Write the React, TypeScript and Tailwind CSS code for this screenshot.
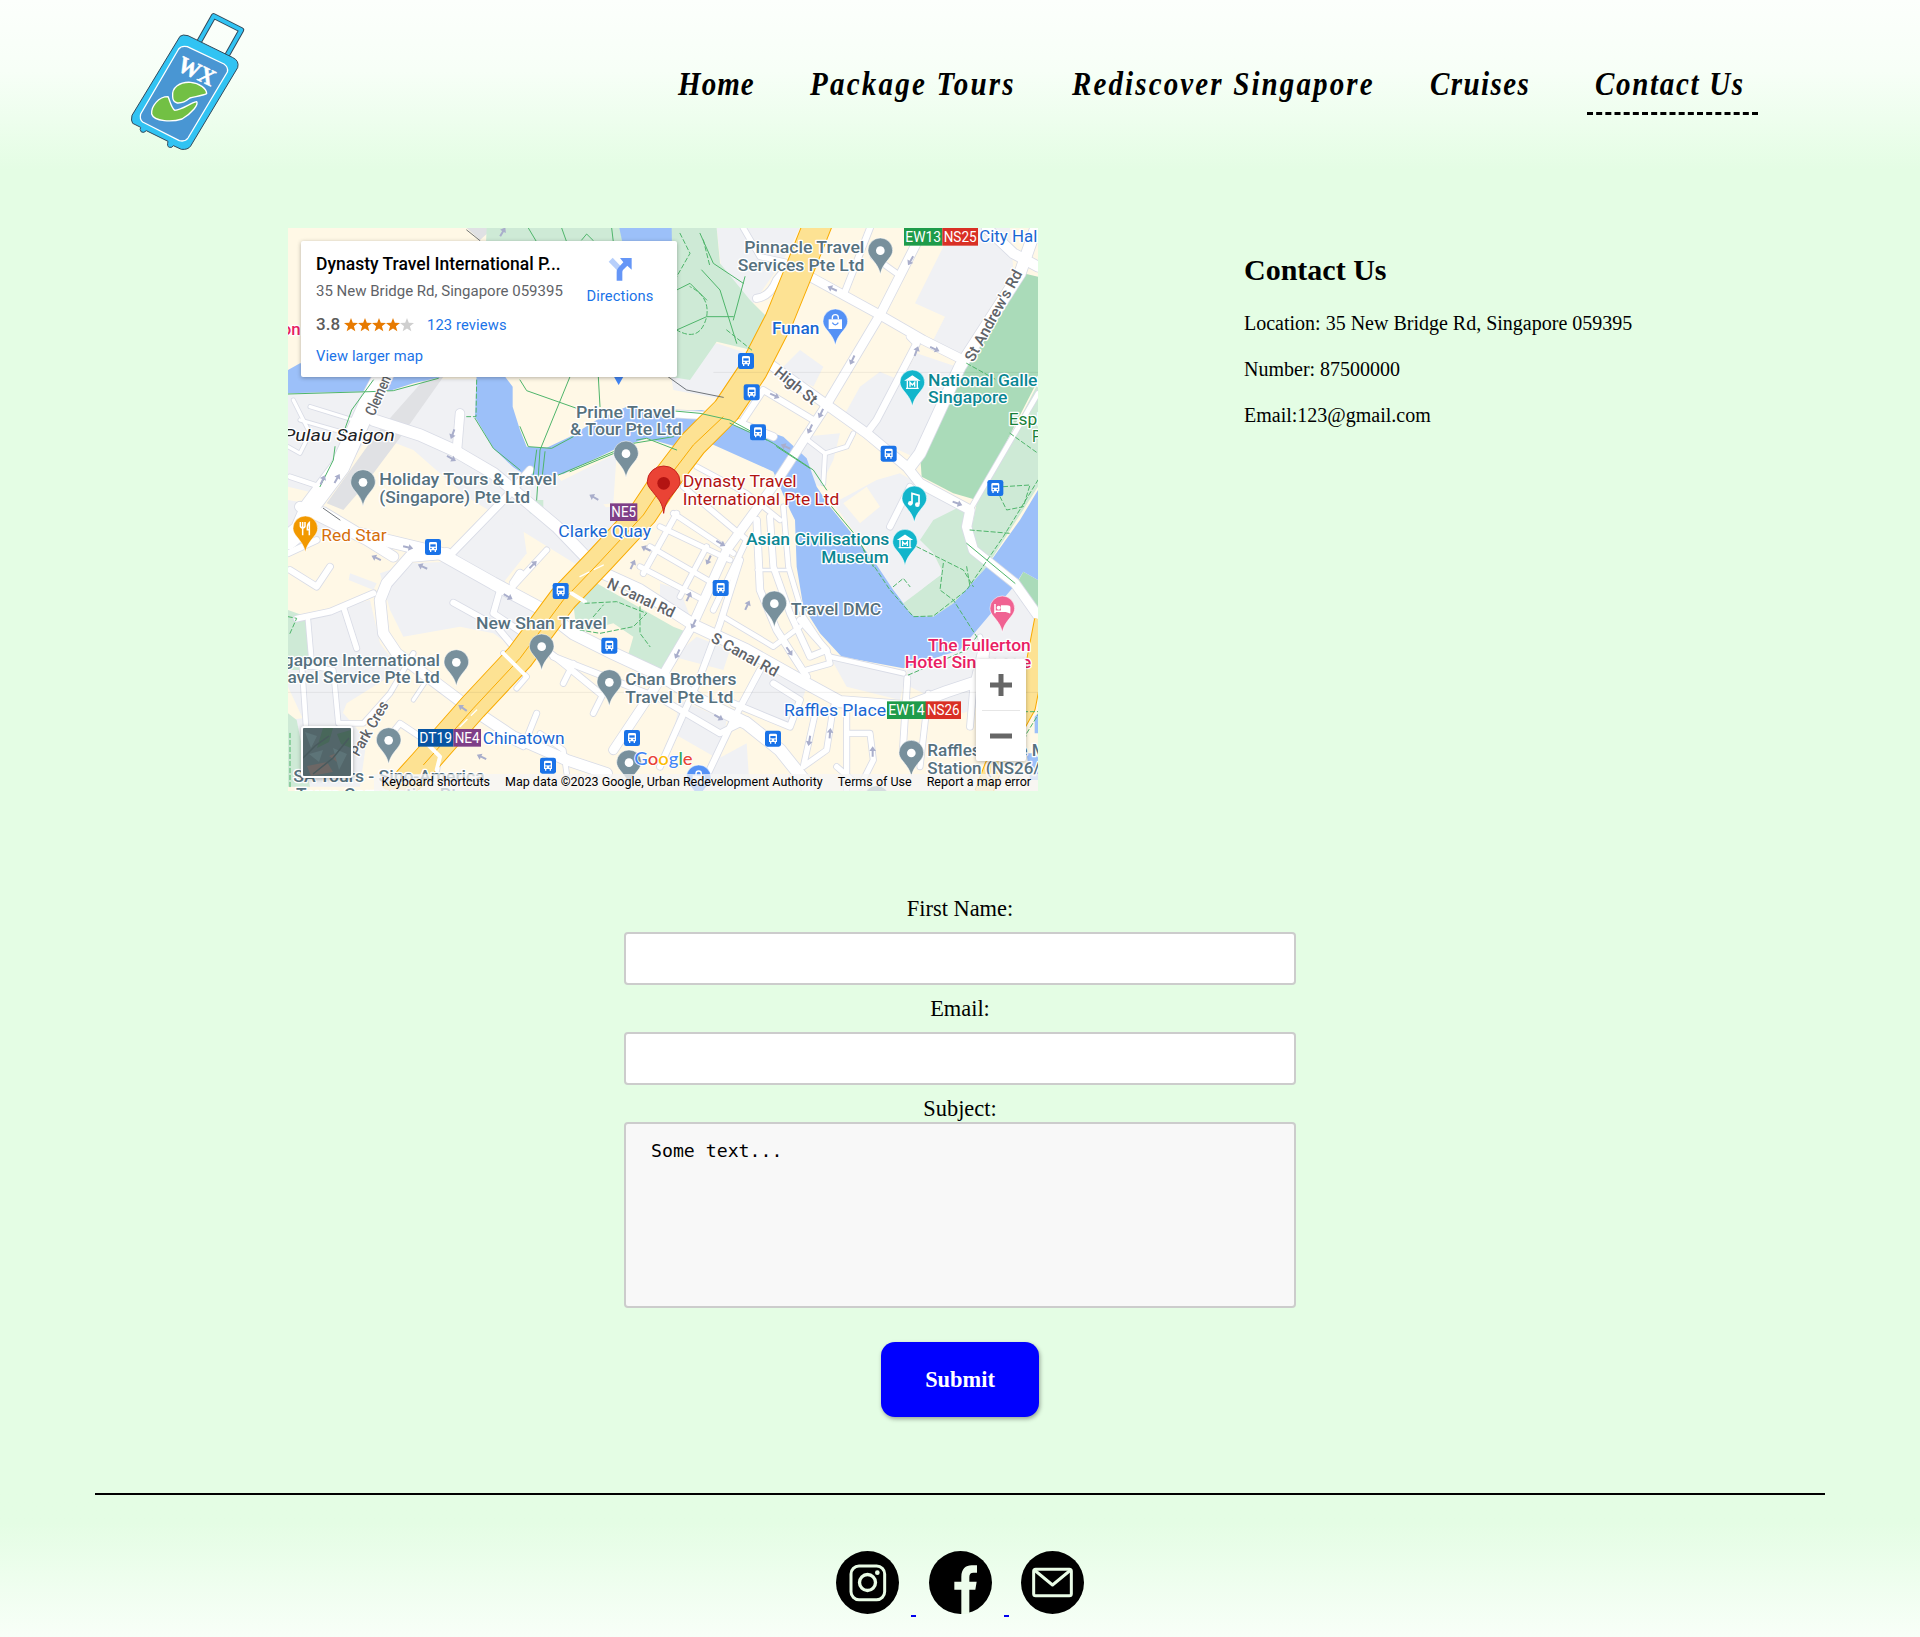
import React from "react";

const navItems = [
  { label: "Home", cls: "w-[132px]", text: "tracking-[1.2px]" },
  { label: "Package Tours", cls: "w-[262px]", text: "tracking-[2.5px]" },
  { label: "Rediscover Singapore", cls: "w-[358px]", text: "tracking-[2.4px]" },
  { label: "Cruises", cls: "w-[165px]", text: "tracking-[1.6px]" },
  { label: "Contact Us", cls: "w-[171px] border-b-[3px] border-dashed border-black", text: "tracking-[1.9px]" },
];

function Logo() {
  return (
    <svg className="h-[170px] w-[200px]" viewBox="0 0 600 510">
      <g strokeLinejoin="round">
        <path d="M297 126L341 48L424 90L379 170" fill="none" stroke="#34495a" strokeWidth="17" />
        <path d="M297 126L341 48L424 90L379 170" fill="none" stroke="#31c3f3" strokeWidth="11" />
        <path
          d="M240 109Q248 102 264 107L397 172Q419 182 413 203L272 438Q264 450 244 448L220 437Q217 444 208 442Q200 440 204 424L139 392Q132 400 124 396Q118 388 122 382L98 370Q92 362 96 346Z"
          fill="#31c3f3"
          stroke="#34495a"
          strokeWidth="3"
        />
        <path
          d="M236 147Q244 136 262 140L372 192Q386 202 382 216L264 414Q256 426 238 422L128 366Q118 358 122 342Z"
          fill="#4996d3"
          stroke="#fff"
          strokeWidth="4"
        />
        <path
          d="M218 290C214 262 240 245 272 247C298 249 320 266 320 281C308 287 284 290 270 294C260 302 247 310 232 309C222 306 218 300 218 290Z"
          fill="#72c044"
          stroke="#fff"
          strokeWidth="4"
        />
        <path
          d="M155 342C153 318 176 290 204 290C210 302 213 322 224 331C250 328 268 310 290 305C296 314 278 337 246 357C218 366 162 366 155 342Z"
          fill="#72c044"
          stroke="#fff"
          strokeWidth="4"
        />
      </g>
      <text
        x="0"
        y="0"
        transform="translate(228 209) rotate(26)"
        textLength="116"
        lengthAdjust="spacingAndGlyphs"
        fontFamily="Liberation Serif, serif"
        fontWeight="700"
        fontSize="70"
        fill="#fff"
        stroke="#fff"
        strokeWidth="1.5"
      >
        WX
      </text>
    </svg>
  );
}

const greys = [
  "M24 520L330 512L470 478L590 478L585 590L650 690L735 765L830 765L910 870L1080 850L1040 930L900 1040L560 830L400 690L270 640L150 830L24 800Z",
  "M1010 700L830 790L900 860L1000 850Z",
  "M390 1030L640 1020L690 1110L790 1180L820 1230L710 1290L640 1240L540 1220L370 1250L330 1170L300 1060Z",
  "M510 1005L640 880L730 930L740 1000L660 1100Z",
  "M640 860L760 790L960 840L1000 890L900 1030Z",
  "M80 1190L270 1140L300 1270L360 1350L200 1450L180 1500L80 1520L24 1400L24 1350L80 1350Z",
  "M24 1500L190 1480L260 1560L240 1700L24 1700Z",
  "M1310 24L1560 24L1510 120L1420 250L1330 200Z",
  "M1950 24L2190 24L2200 150L2040 410L1960 360L1995 290L1905 250L1990 80Z",
  "M1740 500L1800 455L1880 490L1800 640L1690 590Z",
  "M1910 400L2030 440L1900 710L1770 650Z",
  "M1170 450L1310 370L1400 400L1340 540L1180 510Z",
  "M1560 390L1630 440L1600 500L1500 450Z",
  "M1570 650L1680 640L1660 720L1620 800L1540 760Z",
  "M1860 770L1960 800L2050 870L2010 960L1960 1000L2000 1090L1880 1160L1780 1050L1830 890Z",
  "M2080 1210L2200 1100L2270 1200L2230 1400L2050 1480L1890 1400L1880 1350L2030 1290Z",
  "M1650 1310L1880 1350L1860 1440L1700 1400Z",
  "M1250 1250L1350 1290L1330 1350L1180 1310Z",
  "M1380 1460L1450 1350L1580 1400L1540 1520Z",
  "M1200 1440L1340 1500L1320 1620L1180 1540Z",
  "M24 840L140 860L180 940L100 960L24 1000Z",
  "M210 1060L290 1090L280 1110L206 1080Z",
  "M1290 1630L1400 1570L1410 1720L1290 1720Z",
  "M1140 1090L1200 1110L1230 1190L1140 1150Z",
];

const roads: [string, number][] = [
  ["M430 240L270 540L180 740L90 860L60 930L24 960", 56],
  ["M280 600L420 645L520 690L640 760L830 920L960 1055L1080 1110L1250 1220L1400 1290L1560 1380L1680 1445L1880 1460L2000 1415L2090 1385L2110 1300", 34],
  ["M60 860L260 960L340 1010", 30],
  ["M130 880L230 940L480 1000L640 1090L790 1170L880 1240L1000 1300L1150 1370L1260 1440L1400 1510L1500 1590L1580 1690L1590 1760", 36],
  ["M500 1000L390 1010L320 1090L300 1140L310 1240L350 1300L550 1450L700 1550L860 1620L980 1660", 32],
  ["M50 1196L150 1175L280 1120", 18],
  ["M190 1160L230 1285", 16],
  ["M84 1200L96 1340L66 1340L80 1550", 14],
  ["M100 1340L160 1350L175 1510L250 1510L330 1420L400 1300", 14],
  ["M30 1050L110 1100L150 1040", 18],
  ["M24 1000L110 960", 18],
  ["M510 1005L680 830L750 750", 22],
  ["M660 1110L640 1180L760 1260L850 1330L960 1420", 18],
  ["M520 1148L650 1220L700 1280", 18],
  ["M690 1110L800 990", 16],
  ["M700 1090L720 1060", 22],
  ["M670 1300L740 1370L710 1405", 14],
  ["M820 1310L1000 1380L1150 1440L1320 1540L1400 1500", 18],
  ["M850 1390L880 1330", 16],
  ["M940 1480L980 1400", 16],
  ["M690 1560L730 1580L770 1480", 16],
  ["M400 1440L440 1380", 10],
  ["M320 1560L360 1510L480 1590L470 1650", 16],
  ["M860 1660L850 1590L780 1540", 14],
  ["M530 700L540 580", 26],
  ["M30 770L120 800L180 730", 14],
  ["M40 540L90 640L60 700L24 680", 10],
  ["M90 560L220 600L200 640L60 600", 10],
  ["M1590 170L1800 285L1930 360L2050 420", 26],
  ["M1950 -10L1800 285L1630 570L1500 770L1340 990L1240 1210L1140 1380L1060 1500L1000 1590", 26],
  ["M1460 425L1620 540L1760 640L1880 740L1920 790L2070 870L2060 920L2080 990L2205 1090L2290 1210", 28],
  ["M2290 -40L2220 160L2040 440L1920 700L1890 740", 34],
  ["M2120 24L2200 100L2274 140", 30],
  ["M2274 520L2070 870", 14],
  ["M1760 640L1790 600L1910 370L1890 350", 20],
  ["M1770 24L1695 215", 18],
  ["M1780 110L1850 160", 16],
  ["M1390 24L1440 110L1580 140", 16],
  ["M1430 235Q1470 230 1490 180L1540 120", 22],
  ["M1390 600L1450 510L1600 600", 18],
  ["M1570 650L1635 700L1700 680L1720 640M1635 700L1630 790", 12],
  ["M1250 740L1400 820L1500 900", 14],
  ["M1160 580L1330 590L1480 650", 22],
  ["M1210 800L1400 960L1300 1170", 16],
  ["M1140 920L1350 1020M1110 980L1300 1090M1080 1040L1270 1140", 15],
  ["M1180 880L1360 1000", 15],
  ["M1280 980L1200 1130", 15],
  ["M1090 1060L1190 880", 16],
  ["M1430 900L1440 1110L1490 1230L1580 1370", 20],
  ["M1470 890L1480 1040L1530 1180L1590 1310L1640 1290L1560 1200", 18],
  ["M1510 860L1525 1040L1570 1190L1650 1310L1870 1360", 14],
  ["M1380 1020L1320 1210L1260 1370L1140 1640", 18],
  ["M1330 1190L1380 1220L1480 1280L1560 1220", 14],
  ["M1430 1050L1520 1050", 8],
  ["M1580 1350L1650 1330L1640 1290", 16],
  ["M1440 1350L1360 1500L1270 1690", 18],
  ["M1360 1450L1530 1520L1560 1440L1480 1390", 18],
  ["M1610 1460L1570 1640L1640 1590L1660 1460", 16],
  ["M1700 1480L1700 1710M1700 1540L1770 1540L1780 1620L1740 1700L1670 1640", 16],
  ["M1882 1375L1868 1600", 18],
  ["M1945 1420L1920 1640", 16],
  ["M2080 1400L2070 1520", 18],
  ["M2100 1250L2130 1350", 14],
  ["M1830 920L1890 800", 18],
];

const slate = "#56717e";

function Pin({ x, y, color = "#78909c", children }: { x: number; y: number; color?: string; children?: React.ReactNode }) {
  return (
    <g transform={`translate(${x} ${y})`}>
      <path
        d="M0 71C-4 50 -13 40 -25 25C-34 14 -37 7 -37 -1A37 37 0 0 1 37 -1C37 7 34 14 25 25C13 40 4 50 0 71Z"
        fill={color}
        stroke="#fff"
        strokeOpacity=".55"
        strokeWidth="3"
      />
      {children ?? <circle r="13" fill="#fff" />}
    </g>
  );
}

function Bus({ x, y }: { x: number; y: number }) {
  return (
    <g transform={`translate(${x} ${y})`}>
      <rect x="-24" y="-24" width="48" height="48" rx="7" fill="#1a73e8" />
      <path d="M-12 -11Q-12 -15 -7 -15H7Q12 -15 12 -11V10H9V15H5V10H-5V15H-9V10H-12Z" fill="#fff" />
      <path d="M-8 -8H8V-1H-8Z" fill="#1a73e8" />
      <circle cx="-6" cy="4.5" r="2.4" fill="#1a73e8" />
      <circle cx="6" cy="4.5" r="2.4" fill="#1a73e8" />
    </g>
  );
}

function T({ x, y, w, c = slate, s = 51, weight = 500, rot = 0, italic = false, halo = true, children }: {
  x: number; y: number; w: number; c?: string; s?: number; weight?: number; rot?: number; italic?: boolean; halo?: boolean; children: string;
}) {
  return (
    <text
      transform={`translate(${x} ${y}) rotate(${rot})`}
      textLength={w}
      lengthAdjust="spacingAndGlyphs"
      fontSize={s}
      fontWeight={weight}
      fontStyle={italic ? "italic" : "normal"}
      fill={c}
      stroke={halo ? "#fff" : "none"}
      strokeWidth={halo ? 8 : 0}
      strokeLinejoin="round"
      paintOrder="stroke"
    >
      {children}
    </text>
  );
}

function Tag({ x, y, w, c, children }: { x: number; y: number; w: number; c: string; children: string }) {
  return (
    <g>
      <rect x={x} y={y} width={w} height="53" fill={c} />
      <T x={x + 4} y={y + 42} w={w - 8} c="#fff" s={43} weight={400} halo={false}>{children}</T>
    </g>
  );
}

function Museum() {
  return (
    <g fill="none" stroke="#fff" strokeWidth="4">
      <path d="M-18 -8L0 -20L18 -8Z" fill="#fff" />
      <path d="M-15 -6V15M15 -6V15M-19 17H19M-7 12V-1L0 7L7 -1V12" />
    </g>
  );
}

const arrows: [number, number, number][] = [
  [668, 36, -60], [518, 642, 110], [514, 715, 30], [128, 780, -65], [171, 776, -60], [384, 982, 12], [289, 1014, 205],
  [428, 1040, 205], [759, 1034, -45], [684, 1130, 30], [548, 1464, 215], [605, 1611, 205], [1058, 1034, -65],
  [1098, 986, 205], [1322, 970, 30], [1286, 1020, 115], [1226, 1130, -65], [1241, 1212, 115], [1402, 1156, -65],
  [1528, 1294, 55], [1316, 1492, 30], [1588, 1562, 100], [1650, 1540, -85], [1778, 1595, -90], [1892, 122, 120],
  [1657, 206, 205], [1717, 420, 115], [1909, 394, -70], [1964, 387, 25], [1484, 527, 25], [1623, 580, 115],
  [1590, 627, 115], [1517, 680, 205], [2032, 850, 20], [1192, 1302, 115], [942, 832, 210],
];

function MapDrawing() {
  return (
    <svg className="block h-full w-full" viewBox="24 24 2250 1689" fontFamily="Roboto, sans-serif" preserveAspectRatio="none">
      <rect x="24" y="24" width="2250" height="1689" fill="#fff8e6" />
      {greys.map((d) => (
        <path key={d} d={d} fill="#f0f1f4" />
      ))}
      <path d="M490 470L440 470L290 640L140 850L190 870L250 800L370 640ZM560 24L640 24L600 60Z" fill="#e0e1e4" />

      <g fill="#ceead6">
        <path d="M620 24H1310L1320 130L1410 240L1470 300L1415 390L1310 365L1230 480L1170 470H600Z" />
        <path d="M2274 490L2090 850L2080 900L2060 960L1960 880L1920 930L1990 1040L1880 1160L1880 1190L1960 1190L2020 1150L2120 1040L2274 800Z" />
        <path d="M950 1090L1180 1220L1230 1240L1140 1365L1040 1320L1060 1250L1000 1210L890 1240L880 1150Z" />
        <path d="M24 1170L80 1190L86 1350H24ZM24 1480L50 1500L90 1700H24Z" />
        <path d="M730 840L790 840L790 890L750 880Z" />
      </g>
      <path d="M2230 160L2274 170V480L2090 840L2020 820L1925 770L1920 700L2060 430Z" fill="#aadbb9" />
      <path d="M2230 1055L2274 1080V1190L2205 1100Z" fill="#aadbb9" />

      <g fill="#9cc0f9">
        <path d="M24 450L60 430H480V472L400 490L330 512L24 520Z" />
        <path d="M1018 24H1175L1176 80H1030Z" />
        <path d="M590 460L585 590L640 685L700 742L735 765L790 770L850 762L1000 690L1100 655L1190 680L1290 670L1480 755L1530 870L1545 900L1550 1040L1570 1160L1620 1240L1685 1310L1870 1345L2040 1290L2205 1095L2230 1055L2274 1080V810L2220 900L2120 1040L2020 1150L1960 1190L1900 1188L1840 1110L1780 1020L1650 860L1610 800L1580 715L1510 650L1340 590L1265 570L1140 577L1040 560L950 600L870 650L800 683L740 680L720 630L698 560L698 500L660 450Z" />
        <path d="M2264 1490L2274 1480V1540H2264ZM2240 1600H2274V1680H2250Z" />
      </g>
      <path d="M1660 850L1790 780L1860 760L2050 870L2010 960L1960 1000L1990 1060L1870 1150L1780 1015Z" fill="#f0f1f4" />
      <path d="M1690 850L1760 800L1800 860L1740 910Z" fill="#fff8e6" />
      <path d="M1960 900L2060 850L2080 960L2120 1040L2020 1150L1960 1188L1890 1180L1870 1150L1990 1060L1960 1000L1920 960Z" fill="#ceead6" />

      <g fill="none" strokeLinejoin="round" strokeLinecap="round">
        {roads.map(([d, w]) => (
          <path key={d} d={d} stroke="#d9dce6" strokeWidth={w + 5} />
        ))}
        {roads.map(([d, w]) => (
          <path key={d} d={d} stroke="#fff" strokeWidth={w} />
        ))}
        <g strokeLinecap="butt">
          <path d="M1618 0L1550 170L1497 300L1420 450L1340 570L1240 670L1160 775L1090 880L960 1020L850 1135L720 1310L580 1460L430 1630L340 1730" stroke="#f9ab00" strokeWidth="88" />
          <path d="M1618 0L1550 170L1497 300L1420 450L1340 570L1240 670L1160 775L1090 880L960 1020L850 1135L720 1310L580 1460L430 1630L340 1730" stroke="#fde293" strokeWidth="82" />
          <path d="M1330 590L1240 675L1160 780L1090 885L960 1025L850 1140L720 1315L580 1465L430 1635" stroke="#f9ab00" strokeWidth="3" />
          <path d="M2290 1200L2240 1460L2140 1640L2110 1720" stroke="#f9ab00" strokeWidth="56" />
          <path d="M2290 1200L2240 1460L2140 1640L2110 1720" stroke="#fde293" strokeWidth="50" />
        </g>
        <path d="M875 1120L915 1145M670 1300L740 1370M430 1560L480 1610L470 1650" stroke="#fff" strokeWidth="12" />
        <path d="M900 1070L980 1030M540 1520L590 1470" stroke="#fff" strokeWidth="4" strokeDasharray="30 18" />

        <g stroke="#4fb56b" strokeWidth="3">
          <path d="M24 522L270 515L340 512L475 475M280 480L215 570L190 640M165 680L160 720L120 800" />
          <path d="M870 470L780 690L770 840M720 480L740 512L890 565M955 470L960 560M585 595L640 685L720 750M720 620L745 680L815 685L880 650M770 690L758 780M795 695L785 785" />
          <path d="M745 24L770 66M845 24L860 66M905 60L920 42L940 62M995 24L1000 66" />
          <path d="M835 765L1060 670L1180 650M870 755L1050 680M1070 660L1100 655L1190 690" />
          <path d="M1260 40L1300 130L1390 190M1265 150L1320 210L1370 370M1190 330L1280 290L1360 290M1280 240L1230 190L1190 210M1395 170L1360 300" />
          <path d="M1150 570L1260 580L1350 600L1480 670L1600 750L1640 810M1350 610L1460 660M1490 680L1590 745" />
          <path d="M1655 860L1730 950L1780 1040M2060 970L2205 1090" />
        </g>
        <g stroke="#4fb56b" strokeWidth="3" strokeDasharray="13 8">
          <path d="M590 480L588 590L560 590M1200 40L1230 100L1190 170L1150 210M1190 210Q1150 260 1190 330Q1260 370 1280 290Q1290 230 1230 200M1270 60L1290 140M1340 330L1415 390" />
          <path d="M1750 990L1830 1110L1900 1190L1960 1188L2060 1110L2170 950L2274 780M1910 980L2050 1050L2080 1100M2070 930L2190 940M1990 1030L1980 1110L2020 1140L2090 1250M2060 1040L2070 1100M1840 1100L1870 1075L1890 1100" />
          <path d="M2060 430L2150 480M2190 640L2274 700M2170 800L2250 795L2230 860L2180 870L2160 830M2210 1640L2240 1540L2280 1475M2230 1475H2274" />
          <path d="M915 1150L1010 1145L1100 1180L1060 1220L960 1240L900 1230M1080 1160L1080 1240L1110 1280M940 1190L970 1155M24 1190L50 1195L30 1240M30 1540V1700" />
          <path d="M1885 1365L2060 1290L2090 1250" />
        </g>
        <g stroke="#555b61" strokeWidth="2.5">
          <path d="M1150 460L1220 510L1330 532M560 30L600 62M130 865L180 900" />
        </g>
      </g>

      {arrows.map(([x, y, r], i) => (
        <path key={i} transform={`translate(${x} ${y}) rotate(${r})`} d="M-15 -3H2V-10L16 0L2 10V3H-15Z" fill="#a9aecb" />
      ))}
      <path d="M24 1417H2274M1300 457H2274" stroke="#00000010" strokeWidth="3" />

      <T x={283} y={590} w={165} c="#5f6368" s={46} rot={-66}>Clemence</T>
      <T x={1480} y={462} w={150} c="#5f6368" s={46} rot={39}>High St</T>
      <T x={2080} y={428} w={306} c="#5f6368" s={46} rot={-61}>St Andrew's Rd</T>
      <T x={978} y={1102} w={218} c="#5f6368" s={46} rot={25}>N Canal Rd</T>
      <T x={1290} y={1264} w={222} c="#5f6368" s={46} rot={29}>S Canal Rd</T>
      <T x={236} y={1612} w={182} c="#5f6368" s={46} rot={-60}>Park Cres</T>

      <path d="M1002 470H1030L1016 495Z" fill="#4285f4" />
      <T x={-24} y={345} w={86} c="#e91e63">tion</T>
      <T x={10} y={662} w={334} c="#202124" weight={400} italic>Pulau Saigon</T>
      <T x={298} y={796} w={532}>Holiday Tours &amp; Travel</T>
      <T x={298} y={848} w={452}>(Singapore) Pte Ltd</T>
      <T x={888} y={594} w={298}>Prime Travel</T>
      <T x={870} y={646} w={336}>&amp; Tour Pte Ltd</T>
      <T x={1393} y={100} w={360}>Pinnacle Travel</T>
      <T x={1373} y={152} w={380}>Services Pte Ltd</T>
      <T x={1476} y={342} w={142} c="#1967d2">Funan</T>
      <T x={2098} y={67} w={186} c="#1967d2" weight={400}>City Hall</T>
      <T x={1944} y={498} w={373} c="#0b8793">National Gallery</T>
      <T x={1944} y={550} w={238} c="#0b8793">Singapore</T>
      <T x={2186} y={615} w={240} c="#188038" weight={400}>Esplanade</T>
      <T x={2256} y={667} w={90} c="#188038" weight={400}>Park</T>
      <T x={1208} y={802} w={342} c="#b31412" weight={400}>Dynasty Travel</T>
      <T x={1208} y={854} w={470} c="#b31412" weight={400}>International Pte Ltd</T>
      <T x={124} y={962} w={196} c="#d56e0c" weight={400}>Red Star</T>
      <T x={835} y={951} w={278} c="#1967d2" weight={400}>Clarke Quay</T>
      <T x={588} y={1226} w={392}>New Shan Travel</T>
      <T x={-62} y={1337} w={542}>Singapore International</T>
      <T x={-25} y={1388} w={504}>Travel Service Pte Ltd</T>
      <T x={1036} y={1396} w={333}>Chan Brothers</T>
      <T x={1036} y={1448} w={324}>Travel Pte Ltd</T>
      <T x={608} y={1571} w={246} c="#1967d2" weight={400}>Chinatown</T>
      <T x={40} y={1687} w={574}>SA Tours - Sino-America</T>
      <T x={48} y={1740} w={510}>Tours Corporation Pte</T>
      <T x={1398} y={975} w={430} c="#0b8793">Asian Civilisations</T>
      <T x={1624} y={1028} w={202} c="#0b8793">Museum</T>
      <T x={1532} y={1186} w={272}>Travel DMC</T>
      <T x={1944} y={1292} w={308} c="#e91e63">The Fullerton</T>
      <T x={1874} y={1344} w={380} c="#e91e63">Hotel Singapore</T>
      <T x={1512} y={1488} w={306} c="#1967d2" weight={400}>Raffles Place</T>
      <T x={1942} y={1609} w={420}>Raffles Place MRT</T>
      <T x={1942} y={1661} w={338}>Station (NS26/</T>

      <Tag x={1872} y={24} w={115} c="#1e9b4a">EW13</Tag>
      <Tag x={1987} y={24} w={107} c="#d93025">NS25</Tag>
      <Tag x={1821} y={1444} w={117} c="#1e9b4a">EW14</Tag>
      <Tag x={1937} y={1444} w={106} c="#d93025">NS26</Tag>
      <Tag x={990} y={850} w={82} c="#7f3f88">NE5</Tag>
      <Tag x={414} y={1527} w={106} c="#0754a3">DT19</Tag>
      <Tag x={520} y={1527} w={83} c="#7f3f88">NE4</Tag>

      <Pin x={249} y={787} />
      <Pin x={1038} y={701} />
      <Pin x={1801} y={92} />
      <Pin x={529} y={1327} />
      <Pin x={785} y={1280} />
      <Pin x={988} y={1387} />
      <Pin x={326} y={1561} />
      <Pin x={1047} y={1628} />
      <Pin x={1483} y={1151} />
      <Pin x={1894} y={1599} />
      <Pin x={1790} y={1735} />
      <Pin x={76} y={926} color="#f29900">
        <path d="M-15 -20V-8Q-15 -3 -8 -2V20M-8 -20V-4M-1 -20V-8Q-1 -3 -8 -2M12 20V-18Q5 -12 6 3H12" stroke="#fff" strokeWidth="4.5" fill="none" />
      </Pin>
      <Pin x={1666} y={305} color="#5491f5">
        <path d="M-20 -7H20V22H-20Z" fill="#fff" />
        <path d="M-9 -7V-12A9 9 0 0 1 9 -12V-7" stroke="#fff" strokeWidth="4" fill="none" />
        <path d="M-9 3Q0 16 9 3" stroke="#5491f5" strokeWidth="4" fill="none" />
      </Pin>
      <Pin x={1256} y={1673} color="#5491f5">
        <path d="M-18 -7H18V18H-18Z" fill="#fff" />
        <path d="M-8 -7V-12A8 8 0 0 1 8 -12V-7" stroke="#fff" strokeWidth="4" fill="none" />
      </Pin>
      <Pin x={1897} y={488} color="#12b5cb"><Museum /></Pin>
      <Pin x={1875} y={966} color="#12b5cb"><Museum /></Pin>
      <Pin x={1903} y={836} color="#12b5cb">
        <path d="M-7 14V-16L14 -10V16" stroke="#fff" strokeWidth="5" fill="none" />
        <circle cx="-12" cy="14" r="7" fill="#fff" />
        <circle cx="9" cy="18" r="7" fill="#fff" />
      </Pin>
      <Pin x={2167} y={1166} color="#f06292">
        <path d="M-22 -14V14M-22 8H22M22 14V-4Q22 -8 14 -8H-2V6" stroke="#fff" strokeWidth="4.5" fill="#fff" />
        <circle cx="-11" cy="-3" r="6" fill="#fff" />
      </Pin>

      <Bus x={1398} y={423} />
      <Bus x={1415} y={517} />
      <Bus x={1434} y={637} />
      <Bus x={1826} y={701} />
      <Bus x={2146} y={804} />
      <Bus x={459} y={981} />
      <Bus x={842} y={1113} />
      <Bus x={988} y={1277} />
      <Bus x={1322} y={1104} />
      <Bus x={1479} y={1556} />
      <Bus x={1056} y={1554} />
      <Bus x={804} y={1637} />

      <path
        d="M1151 880C1148 850 1136 838 1121 819C1109 804 1102 797 1102 785A49 47 0 0 1 1200 785C1200 797 1193 804 1181 819C1166 838 1154 850 1151 880Z"
        fill="#ea4335"
        stroke="#c5221f"
        strokeWidth="3"
      />
      <circle cx="1151" cy="790" r="19" fill="#b31412" />

      <g fontFamily="Lato, sans-serif" fontSize="53" fontWeight="500" stroke="#fff" strokeWidth="5" paintOrder="stroke">
        <text x="1063" y="1634" textLength="175" lengthAdjust="spacingAndGlyphs">
          <tspan fill="#4285f4">G</tspan>
          <tspan fill="#ea4335">o</tspan>
          <tspan fill="#fbbc04">o</tspan>
          <tspan fill="#4285f4">g</tspan>
          <tspan fill="#34a853">l</tspan>
          <tspan fill="#ea4335">e</tspan>
        </text>
      </g>
    </svg>
  );
}

function Star({ className }: { className: string }) {
  return (
    <svg className={className} viewBox="0 0 24 24" fill="currentColor">
      <path d="M12 0l3.100 8.300 8.900.4-7 5.500 2.400 8.600L12 17.900 4.600 22.800 7 14.200 0 8.700l8.900-.4z" />
    </svg>
  );
}

function PlaceCard() {
  return (
    <div className="absolute left-[13px] top-[13px] flex h-[136px] w-[376px] justify-between rounded-[2px] bg-white pl-[15px] pr-[23px] shadow-[0_1px_4px_rgba(0,0,0,0.3)]">
      <div className="flex flex-col whitespace-nowrap">
        <div className="mt-[11px] text-[17.500px] font-medium leading-6 text-black">Dynasty Travel International P...</div>
        <div className="mt-[5px] w-[247px] text-[15px] leading-[21px] text-[#5f6368]">35 New Bridge Rd, Singapore 059395</div>
        <div className="mt-[12px] flex h-[21px] items-center">
          <span className="w-[28px] text-[17px] font-medium text-[#5b5b5b]">3.8</span>
          <div className="flex text-[#e77a00]">
            <Star className="h-[14px] w-[14px]" />
            <Star className="h-[14px] w-[14px]" />
            <Star className="h-[14px] w-[14px]" />
            <Star className="h-[14px] w-[14px]" />
            <Star className="h-[14px] w-[14px] text-[#cfcfcf]" />
          </div>
          <span className="ml-[13px] translate-y-px text-[14.700px] tracking-[0.15px] text-[#1a73e8]">123 reviews</span>
        </div>
        <div className="mt-[11px] text-[14.700px] leading-[21px] tracking-[0.1px] text-[#1a73e8]">View larger map</div>
      </div>
      <div className="flex w-[68px] flex-col items-center pt-[16px]">
        <svg className="h-6 w-6" viewBox="0 0 72 72">
          <path d="M2 14L14 2L37 26L27 40Z" fill="#b7cffb" />
          <path d="M26 71V46Q26 37 32 31L46 16L36 3H71V38L58 26L45 39Q43 42 43 46V71Z" fill="#6596f7" />
        </svg>
        <div className="mt-[5px] text-[14.700px] leading-[21px] tracking-[0.1px] text-[#1a73e8]">Directions</div>
      </div>
    </div>
  );
}

function MapPanel() {
  return (
    <div className="relative h-[563px] w-[750px] shrink-0 overflow-hidden font-['Roboto',sans-serif]">
      <MapDrawing />
      <PlaceCard />
      <div className="absolute right-[12px] top-[431px] flex h-[102px] w-[50px] flex-col items-center rounded-[2px] bg-white text-[#666] shadow-[0_1px_4px_rgba(0,0,0,0.3)]">
        <svg className="h-[51px] w-[50px]" viewBox="0 0 50 51"><path d="M14 26H36M25 15V37" stroke="currentColor" strokeWidth="5" /></svg>
        <div className="h-px w-[38px] shrink-0 bg-[#e6e6e6]" />
        <svg className="h-[50px] w-[50px]" viewBox="0 0 50 50"><path d="M14 25H36" stroke="currentColor" strokeWidth="5" /></svg>
      </div>
      <div className="absolute bottom-0 right-0 flex h-[17px] items-center gap-[15px] whitespace-nowrap bg-[#f5f5f5]/75 pl-[8px] pr-[7px] text-[12.500px] text-black">
        <span>Keyboard shortcuts</span>
        <span>Map data ©2023 Google, Urban Redevelopment Authority</span>
        <span>Terms of Use</span>
        <span>Report a map error</span>
      </div>
      <div className="absolute left-[13px] top-[498px] h-[52px] w-[52px] overflow-hidden rounded-[3px] border-2 border-white bg-[#53666a] shadow-[0_1px_4px_rgba(0,0,0,0.3)]">
        <svg className="h-full w-full" viewBox="0 0 48 48">
          <path d="M20 0L30 0L26 14L14 20ZM34 6L48 2V20L38 16Z" fill="#48675a" />
          <path d="M4 38L24 34L30 44L8 48ZM26 28L36 24L34 34Z" fill="#6d6765" />
          <path d="M2 4L14 8L8 20ZM6 26L20 22L16 34ZM30 20L44 26L36 42Z" fill="#5d7478" />
          <path d="M0 30L12 18L26 8M10 46L30 30L46 10" stroke="#485a5d" strokeWidth="1.500" fill="none" />
        </svg>
      </div>
    </div>
  );
}

function SocialIcons() {
  return (
    <div className="flex items-start">
      <svg className="h-[63px] w-[63px]" viewBox="0 0 189 189">
        <circle cx="94.500" cy="94.500" r="94.500" fill="#000" />
        <g fill="none" stroke="#e9fce6" strokeWidth="9">
          <rect x="45" y="45" width="101" height="101" rx="24" />
          <circle cx="94.500" cy="94.500" r="24" strokeWidth="10" />
        </g>
        <circle cx="124" cy="65" r="7" fill="#e9fce6" />
      </svg>
      <div className="ml-[12px] mt-[64px] h-[2px] w-[5px] bg-[#0000ee]" />
      <svg className="ml-[12.500px] h-[63px] w-[63px]" viewBox="0 0 189 189">
        <circle cx="94.500" cy="94.500" r="94.500" fill="#000" />
        <path d="M97 190V116H76V92H97V78C97 54 110 43 128 43H144V65H133C125 65 121 69 121 78V92H143L139 116H121V190Z" fill="#edfceb" />
      </svg>
      <div className="ml-[12px] mt-[64px] h-[2px] w-[5px] bg-[#0000ee]" />
      <svg className="ml-[12.500px] h-[63px] w-[63px]" viewBox="0 0 189 189">
        <circle cx="94.500" cy="94.500" r="94.500" fill="#000" />
        <g fill="none" stroke="#e9fce6" strokeWidth="9" strokeLinejoin="round">
          <rect x="38" y="55" width="113" height="79" rx="6" />
          <path d="M40 57L94.500 102L149 57" />
        </g>
      </svg>
    </div>
  );
}

export default function App() {
  return (
    <div className="flex h-[1637px] w-[1920px] flex-col bg-[#e4fde4] font-['Liberation_Serif',serif] text-black">
      <header className="flex h-[170px] shrink-0 items-start bg-linear-to-b from-[#fcfffc] via-[#f7fff7] via-42% to-[#e4fde4] pl-[100px]">
        <Logo />
        <nav className="ml-[370px] flex pt-[59px]">
          {navItems.map((n) => (
            <a key={n.label} className={`block h-[56px] whitespace-nowrap pl-[8px] ${n.cls}`}>
              <span className={`inline-block origin-left scale-x-[0.88] text-[33px] font-bold italic leading-[50px] ${n.text}`}>{n.label}</span>
            </a>
          ))}
        </nav>
      </header>

      <section className="mt-[58px] flex shrink-0 pl-[288px]">
        <MapPanel />
        <div className="ml-[206px] pt-[22px]">
          <h2 className="text-[30px] font-bold leading-[40px]">Contact Us</h2>
          <p className="mt-[10px] text-[20px] leading-[46px]">Location: 35 New Bridge Rd, Singapore 059395</p>
          <p className="text-[20px] leading-[46px]">Number: 87500000</p>
          <p className="text-[20px] leading-[46px]">Email:123@gmail.com</p>
        </div>
      </section>

      <form className="mx-auto mt-[105px] flex w-[672px] shrink-0 flex-col items-center text-[22.400px] leading-[26px]">
        <label>First Name:</label>
        <div className="mt-[10px] h-[53px] w-full rounded-[4px] border-2 border-[#ccc] bg-white" />
        <label className="mt-[11px]">Email:</label>
        <div className="mt-[10px] h-[53px] w-full rounded-[4px] border-2 border-[#ccc] bg-white" />
        <label className="mt-[11px]">Subject:</label>
        <div className="h-[186px] w-full rounded-[4px] border-2 border-[#ccc] bg-[#f8f8f8] px-[25px] pt-[15px] font-['DejaVu_Sans_Mono',monospace] text-[18.200px] leading-[24px]">
          Some text...
        </div>
        <button type="button" className="mt-[34px] h-[75px] w-[158px] rounded-[14px] bg-[#0000ff] font-bold text-white shadow-[1px_2px_4px_rgba(0,0,0,0.35)]">
          Submit
        </button>
      </form>

      <footer className="mt-[76px] flex grow flex-col items-center bg-linear-to-b from-[#e4fde4] from-20% to-[#f8fff8]">
        <div className="h-[2px] w-[1730px] bg-black" />
        <div className="mt-[56px]">
          <SocialIcons />
        </div>
      </footer>
    </div>
  );
}
